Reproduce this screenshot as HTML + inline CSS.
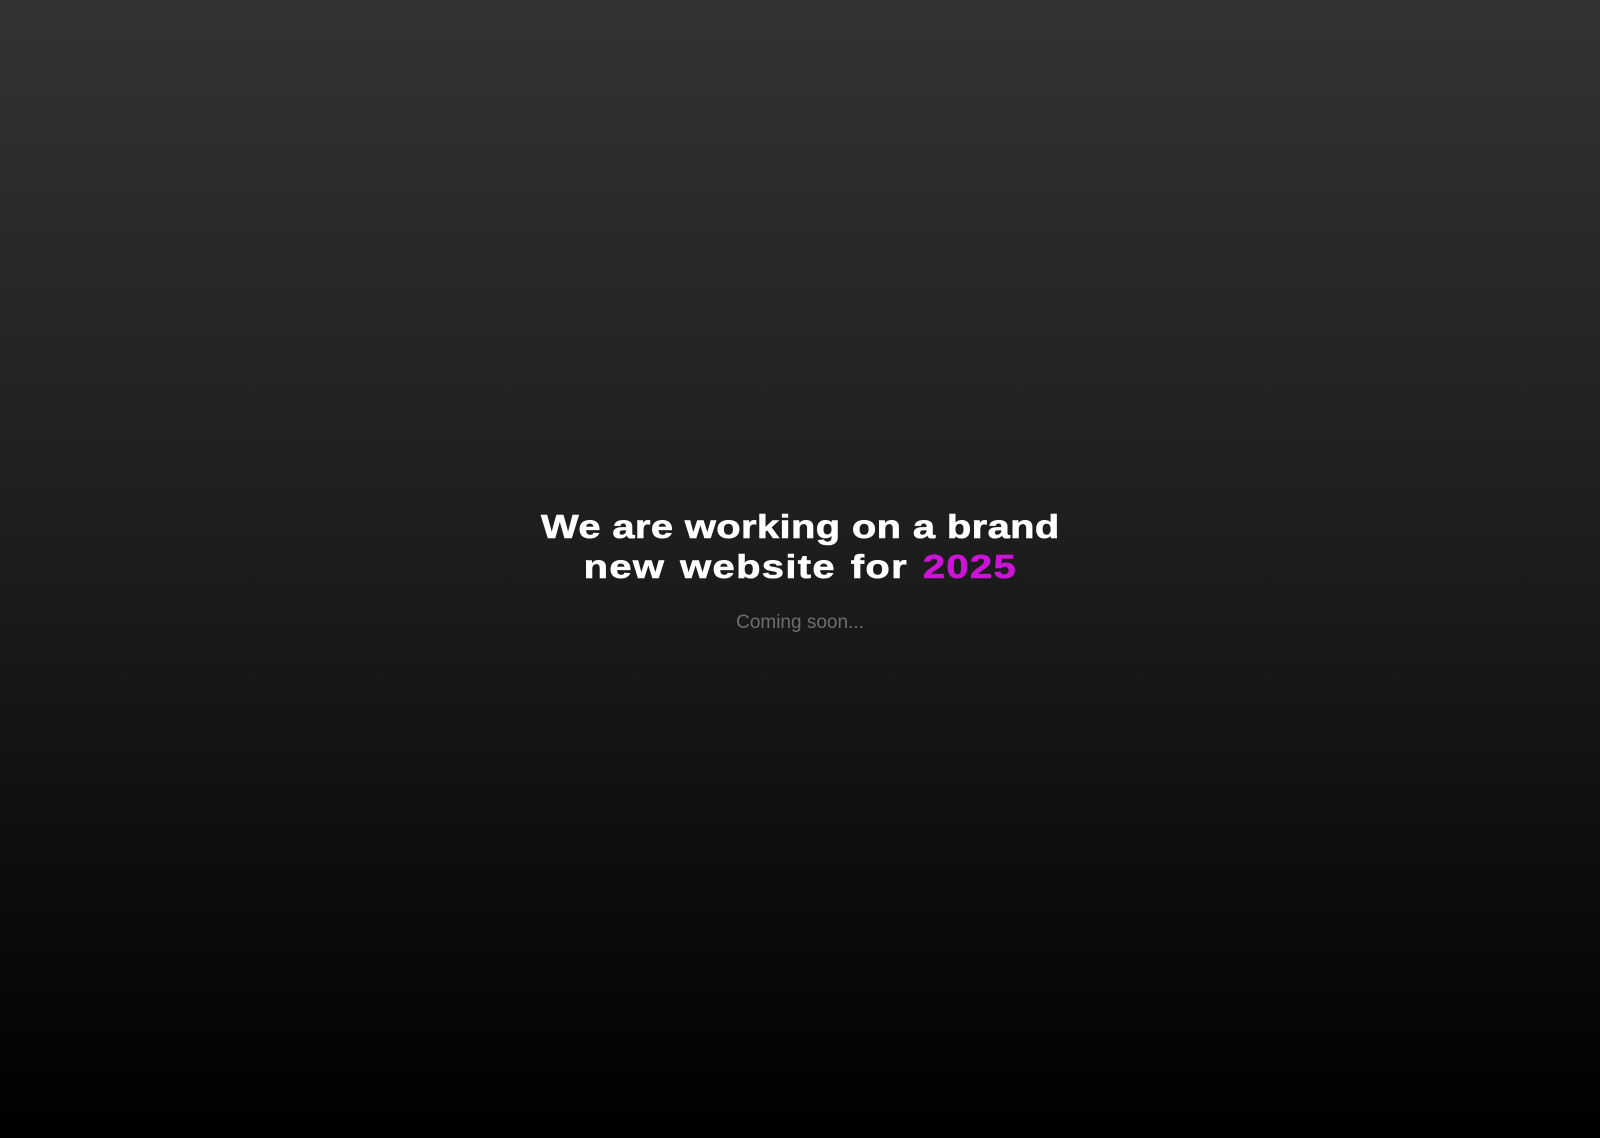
<!DOCTYPE html>
<html><head><style>
html,body{margin:0;width:1600px;height:1138px;overflow:hidden}
body{background:linear-gradient(#333333 0%,#1c1c1c 50%,#000 100%);font-family:"Liberation Sans",sans-serif}
.h{position:absolute;left:0;width:1600px;top:507px;text-align:center}
.h div{display:inline-block;transform:scaleX(1.21);transform-origin:center;color:#fff;font-weight:700;font-size:33px;line-height:40px;letter-spacing:0.3px;-webkit-text-stroke:0.6px #fff}
.h .l2{word-spacing:2px;letter-spacing:1.1px}
.h .m{color:#cc14d6;-webkit-text-stroke:0.6px #cc14d6}
.c{position:absolute;left:0;width:1600px;top:612px;text-align:center;color:#6e6e6e;font-size:19px}
</style></head><body>
<div class="h"><div>We are working on a brand<br><span class="l2">new website for <span class="m">2025</span></span></div></div>
<div class="c">Coming soon...</div>
</body></html>
